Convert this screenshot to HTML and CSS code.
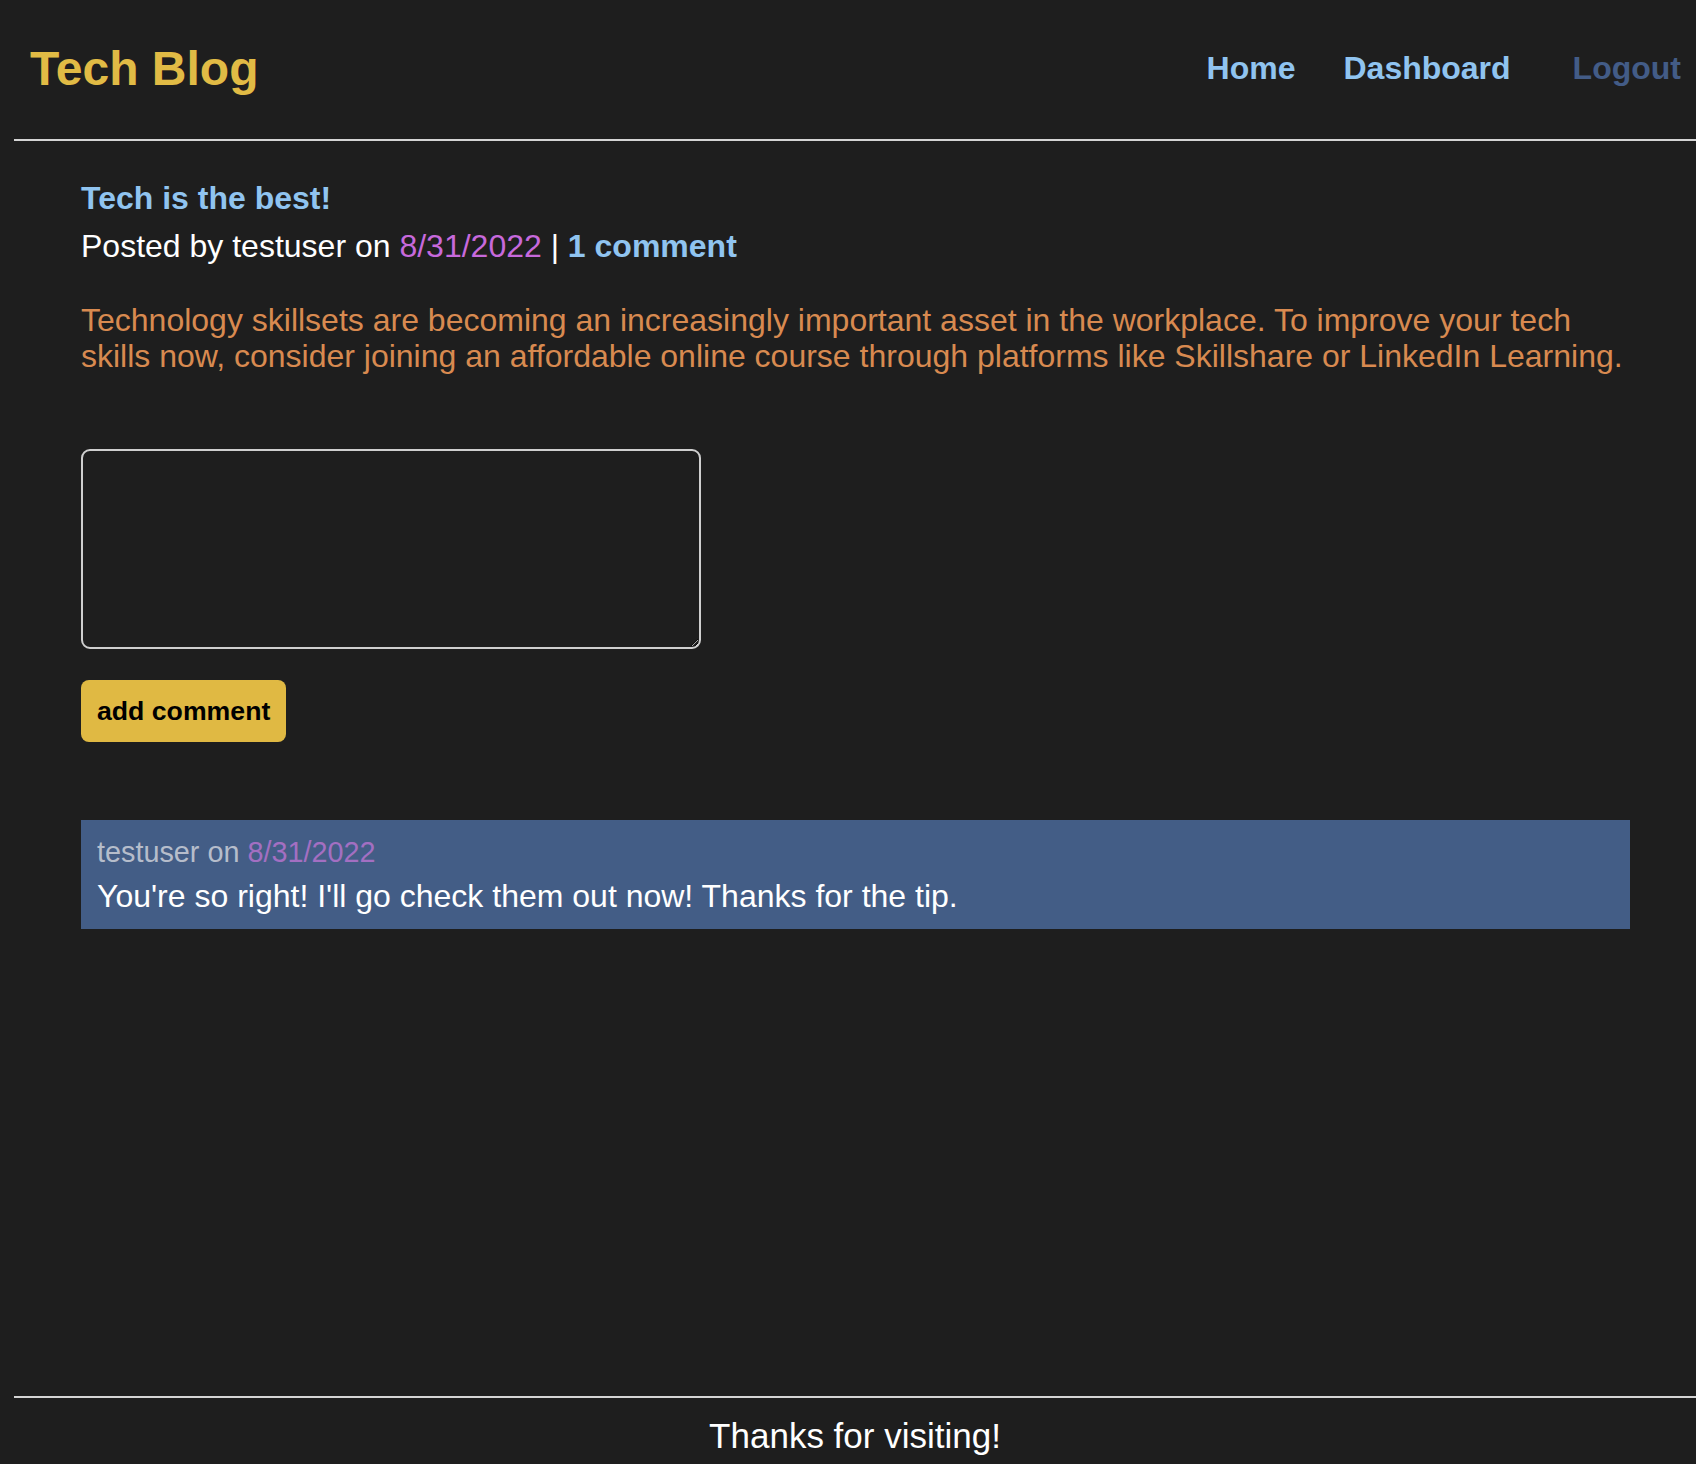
FILE: index.html
```html
<!DOCTYPE html>
<html lang="en">
<head>
<meta charset="utf-8">
<title>Tech Blog</title>
<link rel="stylesheet" href="styles.css">
</head>
<body>
<div class="page">
  <header class="site-header">
    <h1 class="logo">Tech Blog</h1>
    <nav class="nav">
      <a class="nav-link" href="#">Home</a>
      <a class="nav-link nav-dash" href="#">Dashboard</a>
      <a class="nav-link nav-logout" href="#">Logout</a>
    </nav>
  </header>
  <main class="main">
    <article class="post">
      <h2 class="post-title">Tech is the best!</h2>
      <p class="post-meta">Posted by testuser on <span class="date">8/31/2022</span> | <a class="comment-count" href="#">1 comment</a></p>
      <p class="post-body">Technology skillsets are becoming an increasingly important asset in the workplace. To improve your tech skills now, consider joining an affordable online course through platforms like Skillshare or LinkedIn Learning.</p>
    </article>
    <form class="comment-form">
      <textarea class="comment-input"></textarea>
      <button class="comment-btn" type="button">add comment</button>
    </form>
    <section class="comments">
      <div class="comment">
        <p class="comment-meta">testuser on <span class="comment-date">8/31/2022</span></p>
        <p class="comment-text">You're so right! I'll go check them out now! Thanks for the tip.</p>
      </div>
    </section>
  </main>
  <footer class="site-footer">
    <p class="footer-text">Thanks for visiting!</p>
  </footer>
</div>
</body>
</html>
```
FILE: styles.css
```css
* { box-sizing: border-box; }
html, body {
  margin: 0;
  padding: 0;
  background: #1e1e1e;
}
body {
  font-family: "Liberation Sans", Arial, Helvetica, sans-serif;
  color: #ffffff;
}
.page {
  margin-left: 14px;
  min-height: 100vh;
  display: flex;
  flex-direction: column;
}
.site-header {
  display: flex;
  align-items: center;
  justify-content: space-between;
  height: 141px;
  padding: 0 15px 2px 16px;
  border-bottom: 2px solid #d4d4d4;
}
.logo {
  margin: 0;
  font-size: 48px;
  font-weight: bold;
  color: #e1bb45;
  line-height: 1.15;
}
.nav {
  display: flex;
  align-items: center;
}
.nav-link {
  font-size: 32px;
  font-weight: bold;
  color: #90c4f0;
  text-decoration: none;
  line-height: 1.15;
}
.nav-dash { margin-left: 48px; }
.nav-logout { margin-left: 62px; color: #435c87; }
.main {
  flex: 1;
  padding: 39px 66px 0 67px;
}
.post-title {
  margin: 0;
  font-size: 32px;
  font-weight: bold;
  color: #90c4f0;
  line-height: 1.15;
}
.post-meta {
  margin: 11px 0 0;
  font-size: 32px;
  line-height: 1.15;
}
.date { color: #c769dc; }
.comment-count {
  color: #90c4f0;
  font-weight: bold;
  text-decoration: none;
}
.post-body {
  margin: 37px 0 0;
  font-size: 32px;
  line-height: 1.15;
  color: #d88a50;
}
.comment-form {
  display: flex;
  flex-direction: column;
  align-items: flex-start;
  margin-top: 74px;
}
.comment-input {
  width: 620px;
  height: 200px;
  background: #1e1e1e;
  border: 2px solid #cfcfcf;
  border-radius: 9px;
  color: #fff;
  font-family: inherit;
  font-size: 20px;
  padding: 6px;
  margin: 0;
  display: block;
}
.comment-btn {
  margin-top: 31px;
  padding: 15.5px 16px;
  border: none;
  border-radius: 8px;
  background: #e0b943;
  color: #000;
  font-family: inherit;
  font-size: 26.67px;
  font-weight: bold;
  line-height: 1.15;
}
.comments {
  margin-top: 78px;
}
.comment {
  background: #435d86;
  padding: 16px 16px 14px 16px;
}
.comment-meta {
  margin: 0 0 9px;
  font-size: 28.8px;
  line-height: 1.15;
  color: #b6bdcb;
}
.comment-date { color: #a36fc2; }
.comment-text {
  margin: 0;
  font-size: 32px;
  line-height: 1.15;
  color: #ffffff;
}
.site-footer {
  border-top: 2px solid #d4d4d4;
  padding: 18px 0 8px;
  text-align: center;
}
.footer-text {
  margin: 0;
  font-size: 35px;
  line-height: 1.15;
  color: #ffffff;
}
```
